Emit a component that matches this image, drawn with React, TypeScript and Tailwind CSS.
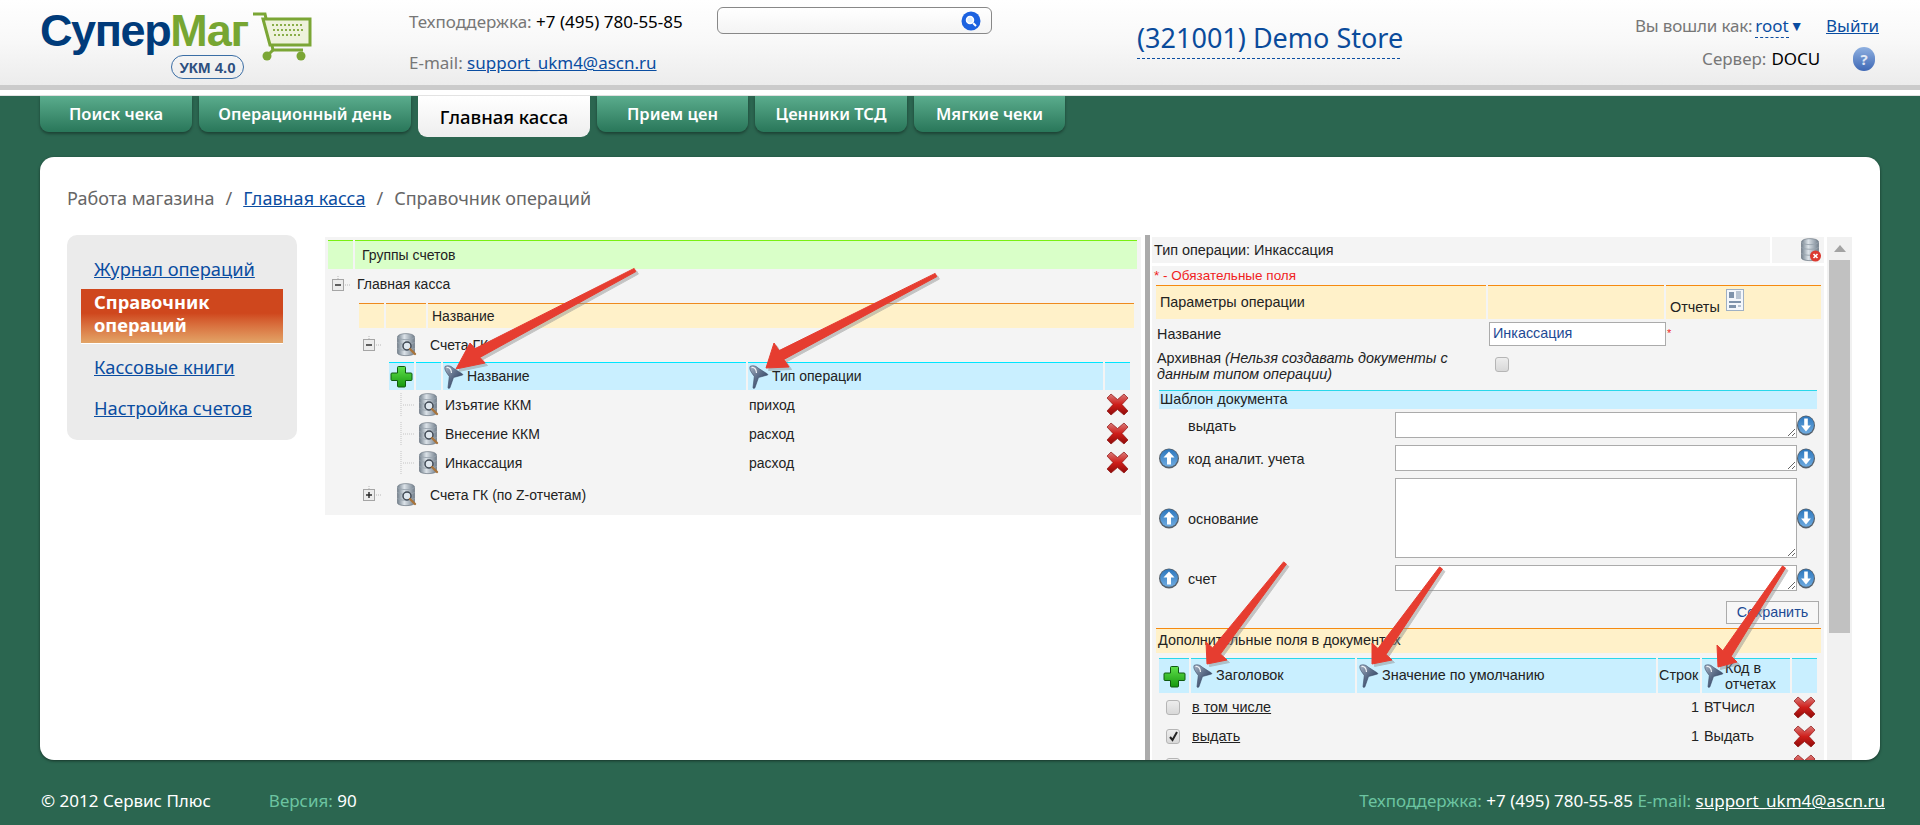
import React from "react";

const SEGOE = 'font-["Noto_Sans",sans-serif]';

function Db({ x = false }: { x?: boolean }) {
  return (
    <svg width="22" height="24" viewBox="0 0 22 24" className="shrink-0">
      <defs>
        <linearGradient id="dbg" x1="0" x2="1" y1="0" y2="0">
          <stop offset="0" stopColor="#76838f" />
          <stop offset="0.4" stopColor="#dce3e9" />
          <stop offset="1" stopColor="#74818e" />
        </linearGradient>
      </defs>
      <path d="M1.500 4c0-4.500 17-4.500 17 0v16c0 3.500-17 3.500-17 0z" fill="url(#dbg)" stroke="#6b7783" strokeWidth="0.7" />
      <path d="M1.500 4c0 3.500 17 3.500 17 0M1.500 9c0 3 17 3 17 0M1.500 15c0 3 17 3 17 0" fill="none" stroke="#99a4ae" strokeWidth="0.9" />
      {x ? (
        <g>
          <circle cx="15.500" cy="18" r="5.500" fill="#dc3a30" />
          <path d="M13.500 16l4 4M17.500 16l-4 4" stroke="#fff" strokeWidth="1.600" />
        </g>
      ) : (
        <g>
          <circle cx="11" cy="13" r="4" fill="#dfe7ee" stroke="#3f4853" strokeWidth="1.500" />
          <path d="M14 16l5 5" stroke="#a8743c" strokeWidth="2.400" strokeLinecap="round" />
        </g>
      )}
    </svg>
  );
}

function Funnel() {
  return (
    <svg width="20" height="24" viewBox="0 0 20 24" className="shrink-0">
      <defs>
        <linearGradient id="fg" x1="0" x2="1" y1="0" y2="1">
          <stop offset="0" stopColor="#aab6c6" />
          <stop offset="0.45" stopColor="#5c6d88" />
          <stop offset="1" stopColor="#1f3152" />
        </linearGradient>
      </defs>
      <path d="M1 1.500C4 0 7 1 9 3l9.500 6c.6.5.2 1.200-.6 1.200L9.500 12.500 6 22.500c-.4 1.200-1.900 1.200-2 0L5.300 11.500C3 8 0 5 1 1.500z" fill="url(#fg)" stroke="#3a4a66" strokeWidth="0.6" />
      <path d="M2.500 2.500C5.500 2 7.500 4.500 7.500 8" fill="none" stroke="#eef2f6" strokeWidth="1.200" />
    </svg>
  );
}

function Plus() {
  return (
    <svg width="23" height="23" viewBox="0 0 23 23" className="shrink-0">
      <defs>
        <linearGradient id="pg" x1="0" x2="0" y1="0" y2="1">
          <stop offset="0" stopColor="#5ee04a" />
          <stop offset="1" stopColor="#17980f" />
        </linearGradient>
      </defs>
      <path d="M8.500 1.500h6a1 1 0 0 1 1 1v5.500h5.500a1 1 0 0 1 1 1v5.500a1 1 0 0 1-1 1h-5.500v5.500a1 1 0 0 1-1 1h-6a1 1 0 0 1-1-1v-5.500h-5.500a1 1 0 0 1-1-1v-5.500a1 1 0 0 1 1-1h5.500v-5.500a1 1 0 0 1 1-1z" fill="url(#pg)" stroke="#0f5a10" strokeWidth="1" />
    </svg>
  );
}

function Cross() {
  return (
    <svg width="23" height="23" viewBox="0 0 23 23" className="shrink-0">
      <defs>
        <linearGradient id="xg" x1="0" x2="0" y1="0" y2="1">
          <stop offset="0" stopColor="#d87a78" />
          <stop offset="0.5" stopColor="#cf1e1a" />
          <stop offset="1" stopColor="#8e0b09" />
        </linearGradient>
      </defs>
      <path d="M5 1l6.500 5.500L18 1l4 4-6 6.500 6 6.500-4 4-6.500-5.500L5 22l-4-4 6-6.500L1 5z" fill="url(#xg)" stroke="#8c1311" strokeWidth="0.7" strokeLinejoin="round" />
    </svg>
  );
}

function RoundArrow({ up }: { up?: boolean }) {
  return (
    <svg width={up ? 20 : 18} height="21" viewBox="0 0 20 21" preserveAspectRatio="none" className="shrink-0">
      <defs>
        <linearGradient id="ag" x1="0" x2="0" y1="0" y2="1">
          <stop offset="0" stopColor="#2c77bd" />
          <stop offset="1" stopColor="#6fabe0" />
        </linearGradient>
      </defs>
      <circle cx="10" cy="10.500" r="10" fill="#56616c" />
      <circle cx="10" cy="10" r="8.800" fill="url(#ag)" />
      <path d={up ? "M10 3.500l5.500 6h-3.500v7h-4v-7h-3.500z" : "M10 16.500l5.500-6h-3.500v-7h-4v7h-3.500z"} fill="#fff" />
    </svg>
  );
}

function TreeBox({ plus }: { plus?: boolean }) {
  return (
    <svg width="18" height="18" viewBox="0 0 18 18" className="shrink-0">
      <path d="M6 0v3M13 9h5" stroke="#b8b8b8" strokeDasharray="1 1" />
      <rect x="0.500" y="3.500" width="11" height="11" fill="#ececec" stroke="#a5a5a5" />
      <path d="M3 9h6" stroke="#222" strokeWidth="1.400" />
      {plus && <path d="M6 6v6" stroke="#222" strokeWidth="1.400" />}
    </svg>
  );
}

function Connector() {
  return (
    <svg width="14" height="24" viewBox="0 0 14 24" className="shrink-0">
      <path d="M1 0v23M3 12h11" stroke="#c4c4c4" strokeDasharray="1 1" fill="none" />
    </svg>
  );
}

function Check({ on }: { on?: boolean }) {
  return (
    <div className="w-[14px] h-[15px] shrink-0 rounded-[3px] border border-[#b5b5b5] bg-gradient-to-b from-[#ededed] to-[#d8d8d8] flex items-center justify-center">
      {on && (
        <svg width="11" height="11" viewBox="0 0 11 11">
          <path d="M2 6l2.500 3L9 1" fill="none" stroke="#222" strokeWidth="2" />
        </svg>
      )}
    </div>
  );
}

function Arrow({ t, p, a, b }: { t: number[]; p: number[]; a: number[]; b: number[] }) {
  const dx = p[0] - t[0];
  const dy = p[1] - t[1];
  const l = Math.hypot(dx, dy);
  const nx = -dy / l;
  const ny = dx / l;
  const mid = [(a[0] + b[0]) / 2, (a[1] + b[1]) / 2];
  const w = 5;
  const aSide = nx * (a[0] - mid[0]) + ny * (a[1] - mid[1]) > 0;
  const pts = [
    [t[0] + nx * 1.8, t[1] + ny * 1.8],
    [mid[0] + nx * w, mid[1] + ny * w],
    aSide ? a : b,
    p,
    aSide ? b : a,
    [mid[0] - nx * w, mid[1] - ny * w],
    [t[0] - nx * 1.8, t[1] - ny * 1.8],
  ]
    .map((q) => q.join(","))
    .join(" ");
  return (
    <g strokeLinejoin="round">
      <polygon points={pts} fill="#8a8a8a" opacity="0.45" transform="translate(2.500 2.500)" stroke="#8a8a8a" strokeWidth="1" />
      <polygon points={pts} fill="#e63d30" stroke="#e63d30" strokeWidth="1" />
    </g>
  );
}

function Tab({ w, label }: { w: string; label: string }) {
  return (
    <div className={`${w} h-[36px] rounded-b-[9px] bg-gradient-to-b from-[#5aac8d] to-[#29775a] shadow-[0_2px_3px_rgba(0,0,0,0.35)] flex items-center justify-center text-white text-[16.500px] font-semibold`}>
      {label}
    </div>
  );
}

function TypeRow({ name, type }: { name: string; type: string }) {
  return (
    <div className="h-[29px] flex items-center">
      <div className="w-[75px] shrink-0" />
      <div className="w-[18px] shrink-0"><Connector /></div>
      <div className="w-[27px] shrink-0"><Db /></div>
      <div className="w-[304px] shrink-0 pt-[1px]">{name}</div>
      <div className="w-[357px] shrink-0 pt-[1px]">{type}</div>
      <Cross />
    </div>
  );
}

function FieldRow({ on, name, num, code }: { on?: boolean; name?: string; num?: string; code?: string }) {
  return (
    <div className="h-[29px] shrink-0 flex items-center">
      <div className="w-[40px] pl-[14px] shrink-0"><Check on={on} /></div>
      <div className="w-[499px] shrink-0 underline">{name}</div>
      <div className="w-[13px] shrink-0">{num}</div>
      <div className="w-[89px] shrink-0">{code}</div>
      <Cross />
    </div>
  );
}

function TemplateRow({ label, h, up = true }: { label: string; h: string; up?: boolean }) {
  return (
    <div className={`${h} ml-[7px] flex items-center shrink-0`}>
      <div className="w-[22px] shrink-0 flex">{up && <RoundArrow up />}</div>
      <div className="w-[214px] shrink-0 pl-[7px] pt-[3px]">{label}</div>
      <textarea className={`${h} w-[402px] shrink-0 bg-white border border-[#ababab] outline-none`} />
      <RoundArrow />
    </div>
  );
}

export default function App() {
  return (
    <div className={`relative h-[825px] w-[1920px] overflow-hidden bg-[#2b6650] flex flex-col ${SEGOE}`}>
      <header className="h-[85px] shrink-0 bg-gradient-to-b from-white via-[#f8f8f8] to-[#ececec] flex text-[#777] text-[17px]">
        <div className="w-[409px] shrink-0 pl-[40px] pt-[6px]">
          <div className="flex items-start font-['Liberation_Sans',sans-serif]">
            <span className="w-[212px] text-[45px] font-bold tracking-[-1.400px] leading-[50px] text-[#003b7a] whitespace-nowrap">
              Супер<span className="text-[#77a632]">Маг</span>
            </span>
            <svg width="60" height="52" viewBox="0 0 60 52" className="mt-[6px] shrink-0">
              <path d="M1 2h12l8 36h30" fill="none" stroke="#7ba635" strokeWidth="3" />
              <path d="M11 7h47v26H18z" fill="#eef2dc" stroke="#7ba635" strokeWidth="3" />
              <path d="M20 13h32M21 18h30M22 23h28" stroke="#8aae49" strokeWidth="2" strokeDasharray="2 2" />
              <circle cx="15" cy="44" r="4.500" fill="#7ba635" />
              <circle cx="49" cy="44" r="4.500" fill="#7ba635" />
              <path d="M21 38l-5 5" stroke="#7ba635" strokeWidth="3" />
            </svg>
          </div>
          <div className="ml-[131px] -mt-[9px] w-[73px] h-[24px] rounded-full border border-[#3b6ea5] font-['Liberation_Sans',sans-serif] font-bold text-[15px] text-[#2d4f7f] flex items-center justify-center leading-none">
            УКМ 4.0
          </div>
        </div>
        <div className="w-[308px] shrink-0 flex flex-col pt-[11px] whitespace-nowrap">
          <div className="leading-[22px]">
            Техподдержка: <span className="text-black">+7 (495) 780-55-85</span>
          </div>
          <div className="leading-[22px] mt-[19px]">
            E-mail: <span className="text-[#0a4da1] underline">support_ukm4@ascn.ru</span>
          </div>
        </div>
        <div className="w-[275px] h-[27px] mt-[7px] shrink-0 rounded-[6px] border border-[#888] bg-gradient-to-b from-white to-[#f4f4f4] flex items-center justify-end pr-[10px]">
          <svg width="20" height="20" viewBox="0 0 20 20">
            <circle cx="10" cy="10" r="9.500" fill="#1c62e0" />
            <circle cx="9" cy="9" r="3.500" fill="#dcecff" stroke="#fff" strokeWidth="1.500" />
            <path d="M12 12l3 3" stroke="#fff" strokeWidth="2" />
          </svg>
        </div>
        <div className="w-[145px] shrink-0" />
        <div className="w-[263px] shrink-0 pt-[21px]">
          <div className="h-[38px] border-b border-dashed border-[#0a4da1] text-[#0a4b9b] text-[27px] leading-[34px] whitespace-nowrap">
            (321001) Demo Store
          </div>
        </div>
        <div className="w-[235px] shrink-0" />
        <div className="flex-1 flex flex-col pt-[15px] pr-[41px] whitespace-nowrap">
          <div className="flex items-start leading-[22px]">
            <span className="tracking-[-0.200px]">Вы вошли как:</span>
            <span className="ml-[3px] text-[#0a4da1] border-b border-dashed border-[#0a4da1] h-[23px]">root</span>
            <span className="text-[#0a4da1] text-[14px] ml-[1px]">▼</span>
            <span className="ml-auto text-[#0a4da1] underline">Выйти</span>
          </div>
          <div className="flex items-center mt-[9px] leading-[22px] pl-[67px]">
            <span>Сервер:</span>
            <span className="ml-[5px] text-black">DOCU</span>
            <div className="ml-auto mr-[4px] w-[22px] h-[24px] rounded-full bg-gradient-to-b from-[#8fb0e0] to-[#3f68b5] text-white/80 text-[15px] font-bold flex items-center justify-center">
              ?
            </div>
          </div>
        </div>
      </header>
      <div className="h-[5px] shrink-0 bg-[#cbcbcb]" />
      <div className="h-[6px] shrink-0 bg-white border-b border-[#e3e3e3]" />
      <nav className="h-[41px] shrink-0 flex items-start pl-[40px] gap-[7px]">
        <Tab w="w-[152px]" label="Поиск чека" />
        <Tab w="w-[212px]" label="Операционный день" />
        <div className="w-[172px] h-[41px] rounded-b-[9px] bg-gradient-to-b from-white to-[#eeeeee] flex items-center justify-center text-black text-[18.500px] font-medium">
          Главная касса
        </div>
        <Tab w="w-[151px]" label="Прием цен" />
        <Tab w="w-[152px]" label="Ценники ТСД" />
        <Tab w="w-[151px]" label="Мягкие чеки" />
      </nav>
      <main className="mx-[40px] mt-[20px] h-[603px] shrink-0 bg-white rounded-[14px] shadow-[0_1px_3px_rgba(0,0,0,0.5)] overflow-hidden flex flex-col">
        <div className="h-[78px] shrink-0 pl-[27px] pt-[28px] text-[18px] leading-[26px] text-[#666] whitespace-nowrap">
          Работа магазина<span className="mx-[11px]">/</span><span className="text-[#0a4da1] underline">Главная касса</span><span className="mx-[11px]">/</span>Справочник операций
        </div>
        <div className="flex flex-1 items-start text-[14px] text-[#222] font-['Liberation_Sans',sans-serif] min-h-0">
          <aside className={`ml-[27px] w-[230px] h-[205px] shrink-0 rounded-[10px] bg-[#ebebeb] px-[14px] pt-[20px] text-[18.300px] ${SEGOE}`}>
            <div className="h-[34px] pl-[13px] leading-[28px] text-[#0a4da1] underline whitespace-nowrap">Журнал операций</div>
            <div className="h-[55px] pl-[13px] pt-[1px] pb-[1px] leading-[23px] font-bold text-white bg-gradient-to-b from-[#cf471d] via-[#cf471d] via-45% to-[#e2a467] border-b border-white">
              Справочник операций
            </div>
            <div className="h-[41px] mt-[9px] pl-[13px] leading-[27px] text-[#0a4da1] underline whitespace-nowrap">Кассовые книги</div>
            <div className="h-[33px] pl-[13px] leading-[27px] text-[#0a4da1] underline whitespace-nowrap">Настройка счетов</div>
          </aside>
          <section className="ml-[28px] mt-[2px] w-[816px] h-[278px] shrink-0 bg-[#f4f4f4] pt-[3px]">
            <div className="ml-[3px] h-[29px] flex gap-[2px]">
              <div className="w-[25px] bg-[#d9ffc8] border-t border-[#79f010]" />
              <div className="w-[782px] pl-[7px] flex items-center bg-[#d9ffc8] border-t border-[#79f010]">Группы счетов</div>
            </div>
            <div className="h-[32px] pl-[7px] pb-[1px] mb-[2px] flex items-center">
              <TreeBox />
              <span className="ml-[7px]">Главная касса</span>
            </div>
            <div className="ml-[34px] h-[25px] flex gap-[2px]">
              <div className="w-[25px] bg-[#fff1c9] border-t border-[#ee8a1f]" />
              <div className="w-[40px] bg-[#fff1c9] border-t border-[#ee8a1f]" />
              <div className="w-[706px] pl-[4px] flex items-center bg-[#fff1c9] border-t border-[#ee8a1f]">Название</div>
            </div>
            <div className="h-[34px] pl-[38px] flex items-center">
              <div className="w-[33px] shrink-0"><TreeBox /></div>
              <Db />
              <span className="ml-[12px]">Счета ГК</span>
            </div>
            <div className="ml-[64px] h-[28px] flex gap-[2px]">
              <div className="w-[25px] flex items-center justify-center bg-[#c9efff] border-t border-[#00e5ff]"><Plus /></div>
              <div className="w-[25px] bg-[#c9efff] border-t border-[#00e5ff]" />
              <div className="w-[303px] flex items-center pl-[1px] gap-[3px] bg-[#c9efff] border-t border-[#00e5ff]"><Funnel />Название</div>
              <div className="w-[355px] flex items-center pl-[1px] gap-[3px] bg-[#c9efff] border-t border-[#00e5ff]"><Funnel />Тип операции</div>
              <div className="w-[25px] bg-[#c9efff] border-t border-[#00e5ff]" />
            </div>
            <TypeRow name="Изъятие ККМ" type="приход" />
            <TypeRow name="Внесение ККМ" type="расход" />
            <TypeRow name="Инкассация" type="расход" />
            <div className="h-[36px] pl-[38px] flex items-center">
              <div className="w-[33px] shrink-0"><TreeBox plus /></div>
              <Db />
              <span className="ml-[12px]">Счета ГК (по Z-отчетам)</span>
            </div>
          </section>
          <div className="ml-[4px] w-[5px] h-[525px] shrink-0 bg-[#ababab]" />
          <section className="ml-[2px] w-[672px] h-[523px] shrink-0 overflow-hidden flex flex-col mt-[2px] text-[14.400px]">
            <div className="h-[26px] shrink-0 flex gap-[2px]">
              <div className="w-[618px] pl-[2px] pt-[1px] bg-[#f4f4f4] flex items-center">Тип операции: Инкассация</div>
              <div className="w-[52px] bg-[#f4f4f4] flex items-start justify-end pr-[2px] pt-[1px]"><Db x /></div>
            </div>
            <div className="mt-[3px] flex-1 min-h-0 bg-[#f4f4f4] flex flex-col">
              <div className="h-[19px] shrink-0 pl-[2px] text-[13.500px] leading-[19px] text-[#f01e1e]">* - Обязательные поля</div>
              <div className="ml-[4px] h-[34px] shrink-0 flex gap-[2px]">
                <div className="w-[330px] pl-[4px] flex items-center bg-[#fff1c9] border-t border-[#f58a10]">Параметры операции</div>
                <div className="w-[176px] bg-[#fff1c9] border-t border-[#f58a10]" />
                <div className="w-[155px] pl-[4px] flex items-center gap-[6px] bg-[#fff1c9] border-t border-[#f58a10]">
                  <span className="mt-[10px]">Отчеты</span>
                  <svg width="18" height="22" viewBox="0 0 18 22" className="-mt-[6px]">
                    <rect x="0.500" y="0.500" width="17" height="21" fill="#f4f7fb" stroke="#9fb0c4" />
                    <path d="M3 3h5v6H3zM3 12h12v2H3zM3 16h7v3H3z" fill="#7f93ab" />
                    <path d="M10 3h5M10 5h5M10 7h5M10 9h5M12 17h3" stroke="#7f93ab" />
                  </svg>
                </div>
              </div>
              <div className="ml-[5px] mt-[3px] h-[24px] shrink-0 flex items-center">
                <div className="w-[332px] shrink-0 pt-[1px]">Название</div>
                <div className="w-[177px] h-[24px] shrink-0 pl-[3px] bg-white border border-[#ababab] text-[#1d4a94] flex items-center">Инкассация</div>
                <span className="text-[#f01e1e] text-[11px] self-start mt-[3px] ml-[1px]">*</span>
              </div>
              <div className="ml-[5px] mt-[4px] h-[32px] shrink-0 flex items-center">
                <div className="w-[338px] shrink-0 pr-[30px] leading-[16px]">
                  Архивная <i>(Нельзя создавать документы с данным типом операции)</i>
                </div>
                <div className="-mt-[4px]"><Check /></div>
              </div>
              <div className="ml-[7px] mt-[8px] w-[658px] h-[19px] shrink-0 pl-[1px] flex items-center bg-[#c9efff] border-t border-[#2ad7ea]">Шаблон документа</div>
              <div className="mt-[3px] flex flex-col gap-[7px] shrink-0">
                <TemplateRow label="выдать" h="h-[26px]" up={false} />
                <TemplateRow label="код аналит. учета" h="h-[26px]" />
                <TemplateRow label="основание" h="h-[80px]" />
                <TemplateRow label="счет" h="h-[26px]" />
              </div>
              <div className="mt-[10px] pr-[5px] flex justify-end shrink-0">
                <div className="w-[93px] h-[23px] border border-[#ababab] bg-[#f7f7f7] text-[#1d4a94] flex items-center justify-center">Сохранить</div>
              </div>
              <div className="ml-[4px] mt-[4px] w-[665px] h-[25px] shrink-0 pl-[2px] flex items-center bg-[#fff1c9] border-t border-[#f58a10]">Дополнительные поля в документах</div>
              <div className="ml-[7px] mt-[5px] h-[35px] shrink-0 flex gap-[2px]">
                <div className="w-[30px] flex items-center justify-center bg-[#c9efff] border-t border-[#2ad7ea]"><Plus /></div>
                <div className="w-[164px] pl-[2px] flex items-center gap-[3px] bg-[#c9efff] border-t border-[#2ad7ea]"><Funnel />Заголовок</div>
                <div className="w-[299px] pl-[2px] flex items-center gap-[3px] bg-[#c9efff] border-t border-[#2ad7ea]"><Funnel />Значение по умолчанию</div>
                <div className="w-[42px] pl-[1px] flex items-center whitespace-nowrap bg-[#c9efff] border-t border-[#2ad7ea]">Строк</div>
                <div className="w-[88px] pl-[2px] flex items-center gap-[1px] leading-[16px] bg-[#c9efff] border-t border-[#2ad7ea]"><Funnel /><span>Код в отчетах</span></div>
                <div className="w-[25px] bg-[#c9efff] border-t border-[#2ad7ea]" />
              </div>
              <FieldRow name="в том числе" num="1" code="ВТЧисл" />
              <FieldRow on name="выдать" num="1" code="Выдать" />
              <FieldRow />
            </div>
          </section>
          <div className="ml-[3px] w-[25px] h-[523px] mt-[2px] shrink-0 bg-[#f1f1f1] flex flex-col items-center">
            <div className="h-[23px] shrink-0 flex items-center justify-center">
              <div className="w-0 h-0 border-l-[6px] border-r-[6px] border-b-[7px] border-l-transparent border-r-transparent border-b-[#a3a3a3]" />
            </div>
            <div className="w-[21px] h-[373px] bg-[#c1c1c1]" />
          </div>
        </div>
      </main>
      <footer className="flex-1 pl-[41px] pr-[35px] pt-[30px] flex text-[17px] leading-[22px] text-white whitespace-nowrap">
        <span>© 2012 Сервис Плюс</span>
        <span className="ml-[58px]"><span className="text-[#6cc4a1]">Версия:</span> 90</span>
        <span className="ml-auto">
          <span className="text-[#6cc4a1]">Техподдержка:</span> +7 (495) 780-55-85 <span className="text-[#6cc4a1]">E-mail:</span> <span className="underline">support_ukm4@ascn.ru</span>
        </span>
      </footer>
      <svg width="1920" height="825" viewBox="0 0 1920 825" className="absolute left-0 top-0 pointer-events-none">
        <Arrow t={[635, 270]} p={[456, 369]} a={[470, 343]} b={[485, 363]} />
        <Arrow t={[936, 275]} p={[766, 368]} a={[774, 343]} b={[789, 367]} />
        <Arrow t={[1285, 563]} p={[1207, 664]} a={[1206, 642]} b={[1227, 660]} />
        <Arrow t={[1441, 568]} p={[1372, 664]} a={[1372, 643]} b={[1392, 660]} />
        <Arrow t={[1784, 567]} p={[1718, 667]} a={[1717, 645]} b={[1737, 662]} />
      </svg>
    </div>
  );
}
